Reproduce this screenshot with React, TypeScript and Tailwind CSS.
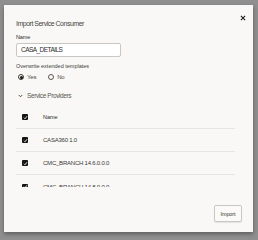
import React from "react";

const font = { fontFamily: "'Liberation Sans', Arial, sans-serif" };

function Check() {
  return (
    <div className="w-[6px] h-[6px] bg-[#161513] rounded-[1px] flex items-center justify-center shrink-0">
      <svg width="5" height="5" viewBox="0 0 10 10">
        <path d="M2 5.5 L4 7.5 L8 2.5" stroke="#fff" strokeWidth="1.8" fill="none" />
      </svg>
    </div>
  );
}

function Row({ label, last }: { label: string; last?: boolean }) {
  return (
    <div className={"h-[23px] flex items-center pl-[6px] shrink-0 " + (last ? "" : "border-b border-[#e7e5e2]")}>
      <Check />
      <span className="ml-[15px] text-[6px] leading-[8px] tracking-[-0.22px] text-[#3a3936]">{label}</span>
    </div>
  );
}

export default function App() {
  return (
    <div className="w-[258px] h-[240px] bg-[#8f8f8f] pt-[5px] pl-[4px] overflow-hidden" style={font}>
      <div className="w-[249px] h-[227px] bg-[#f9f8f6] shadow-[0_2px_4px_rgba(0,0,0,0.35)] flex flex-col relative">
        <svg className="absolute right-[7px] top-[10px]" width="6" height="6" viewBox="0 0 10 10">
          <path d="M1.5 1.5 L8.5 8.5 M8.5 1.5 L1.5 8.5" stroke="#161513" strokeWidth="1.7" />
        </svg>
        <div className="pt-[14px] pl-[12px]">
          <div className="text-[7px] leading-[9px] tracking-[-0.5px] text-[#4a4845]">Import Service Consumer</div>
          <div className="mt-[6px] text-[5.5px] leading-[6px] tracking-[-0.1px] text-[#2e2d2b]">Name</div>
          <div className="mt-[3px] w-[105px] h-[14px] border border-[#c9c7c3] rounded-[2px] bg-white flex items-center pl-[4px]">
            <span className="text-[6.5px] leading-[8px] tracking-[-0.55px] text-[#2e2d2b]">CASA_DETAILS</span>
          </div>
          <div className="mt-[6px] text-[5.5px] leading-[6px] text-[#3f3e3b]">Overwrite extended templates</div>
          <div className="mt-[4px] h-[8px] flex items-center pl-[2px]">
            <div className="w-[6px] h-[6px] rounded-full border border-[#3a3936] flex items-center justify-center">
              <div className="w-[3px] h-[3px] rounded-full bg-[#161513]" />
            </div>
            <span className="ml-[3px] text-[6px] leading-[8px] tracking-[-0.2px] text-[#4a4845]">Yes</span>
            <div className="ml-[12px] w-[6px] h-[6px] rounded-full border border-[#5a5955]" />
            <span className="ml-[3px] text-[6px] leading-[8px] tracking-[-0.2px] text-[#4a4845]">No</span>
          </div>
          <div className="mt-[11px] h-[8px] flex items-center pl-[2px]">
            <svg width="5" height="4" viewBox="0 0 10 8">
              <path d="M1.5 2 L5 5.5 L8.5 2" stroke="#3a3936" strokeWidth="1.8" fill="none" />
            </svg>
            <span className="ml-[4px] text-[6.5px] leading-[8px] tracking-[-0.4px] text-[#5a5955]">Service Providers</span>
          </div>
          <div className="mt-[6px] w-[219px] h-[81px] overflow-hidden flex flex-col">
            <div className="h-[23px] flex items-center pl-[6px] shrink-0 border-b border-[#e7e5e2]">
              <Check />
              <span className="ml-[15px] text-[5.5px] leading-[8px] text-[#2e2d2b]">Name</span>
            </div>
            <Row label="CASA360 1.0" />
            <Row label="CMC_BRANCH 14.6.0.0.0" />
            <Row label="CMC_BRANCH 14.8.0.0.0" last />
          </div>
        </div>
        <div className="mt-[18px] flex justify-end pr-[11px]">
          <div className="w-[28px] h-[17px] border border-[#c9c7c3] rounded-[2px] bg-[#fbfaf9] shadow-[0_1px_1px_rgba(0,0,0,0.08)] flex items-center justify-center">
            <span className="text-[5.5px] leading-[6px] tracking-[-0.1px] text-[#3a3936]">Import</span>
          </div>
        </div>
      </div>
    </div>
  );
}
